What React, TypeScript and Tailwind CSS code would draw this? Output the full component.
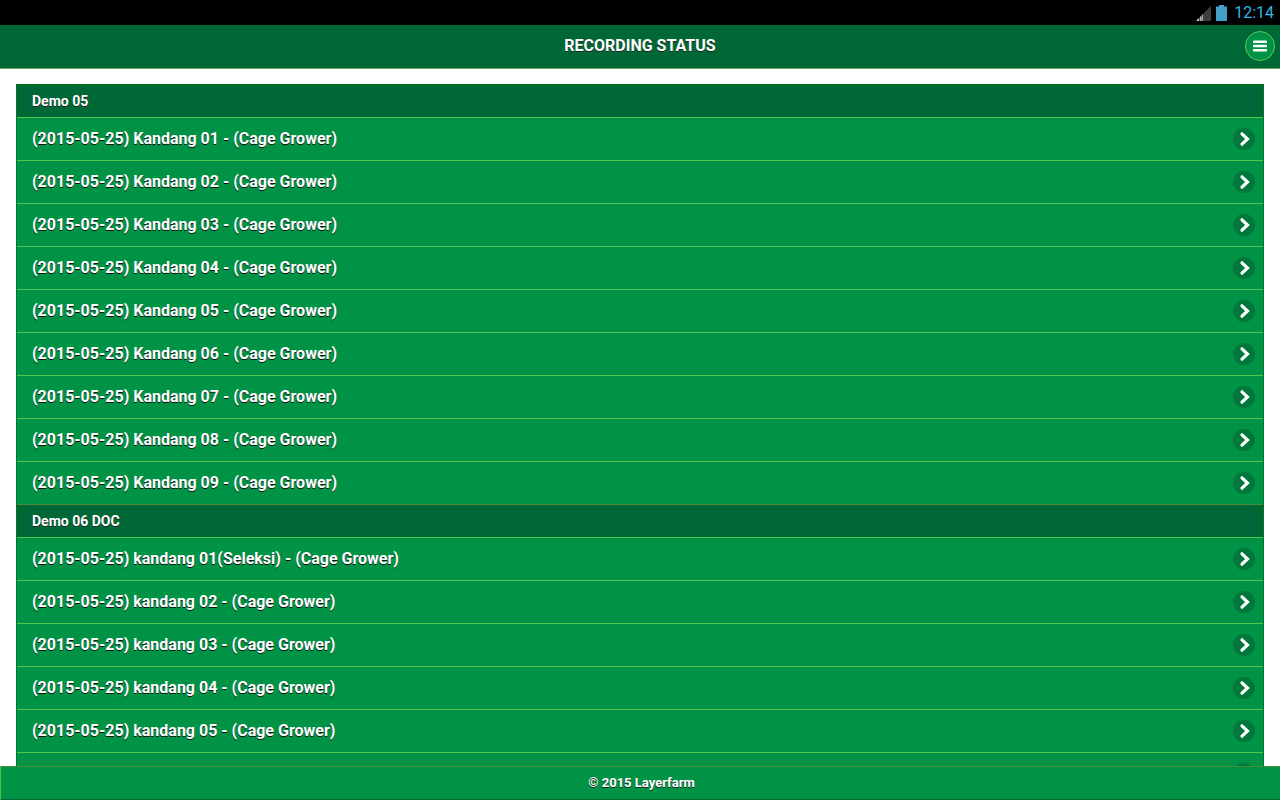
import React from 'react';

interface Section {
  title: string;
  cages: string[];
}

const sections: Section[] = [
  {
    title: 'Demo 05',
    cages: [
      'Kandang 01',
      'Kandang 02',
      'Kandang 03',
      'Kandang 04',
      'Kandang 05',
      'Kandang 06',
      'Kandang 07',
      'Kandang 08',
      'Kandang 09',
    ],
  },
  {
    title: 'Demo 06 DOC',
    cages: [
      'kandang 01(Seleksi)',
      'kandang 02',
      'kandang 03',
      'kandang 04',
      'kandang 05',
      'kandang 06',
    ],
  },
];

const StatusBar: React.FC = () => (
  <div className="flex h-[25px] shrink-0 items-center justify-end bg-black pr-[6px] text-[#33b5e5]">
    <svg className="mr-[5px] h-4 w-[15px]" viewBox="0 0 15 16">
      <path d="M15 1v15H0z" fill="#3f3f3f" />
      <path d="M3 13V16H0z" fill="#c8c8c8" />
      <path d="M4 12l1.500-1.500V16H4z" fill="#b8b8b8" />
      <path d="M6 10l1-1v7H6z" fill="#a8a8a8" />
    </svg>
    <svg className="mr-[7px] h-4 w-[11px]" viewBox="0 0 11 16">
      <path d="M3 0h5v1.500h3V16H0V1.500h3z" fill="#45a0c9" />
    </svg>
    <span className="text-base">12:14</span>
  </div>
);

const Header: React.FC = () => (
  <header className="grid h-11 shrink-0 grid-cols-[1fr_auto_1fr] items-center border-b border-[#6fa862] bg-[#006837] px-[5px] pb-px">
    <h1 className="col-start-2 text-base font-bold text-white [text-shadow:0_1px_0_#222]">RECORDING STATUS</h1>
    <button
      type="button"
      aria-label="Menu"
      className="flex h-[30px] w-[30px] items-center justify-center justify-self-end rounded-full border border-[#5cc85a] bg-[#009245]"
    >
      <svg className="h-[12px] w-[14px]" viewBox="0 0 14 12" fill="#fff">
        <rect y="0.500" width="14" height="2.600" rx="0.500" />
        <rect y="4.700" width="14" height="2.600" rx="0.500" />
        <rect y="8.900" width="14" height="2.600" rx="0.500" />
      </svg>
    </button>
  </header>
);

const CageRow: React.FC<{ name: string }> = ({ name }) => (
  <li>
    <a
      href="#"
      className="flex h-[43px] items-center justify-between border-t border-[#55c552] bg-[#009245] pr-2 pl-[15px] text-base font-bold text-white [text-shadow:0_1px_0_#111]"
    >
      <span>(2015-05-25) {name} - (Cage Grower)</span>
      <svg className="h-[22px] w-[22px]" viewBox="0 0 22 22">
        <circle cx="11" cy="11" r="11" fill="#00783b" />
        <path
          d="M9 5.800L14.500 11 9 16.200"
          fill="none"
          stroke="#fff"
          strokeWidth="3.200"
          strokeLinecap="round"
          strokeLinejoin="miter"
        />
      </svg>
    </a>
  </li>
);

const App: React.FC = () => {
  return (
    <div className="flex h-screen flex-col bg-white font-[Roboto,sans-serif]">
      <StatusBar />
      <Header />
      <main className="min-h-0 flex-1 overflow-y-auto px-4 pt-[15px] [scrollbar-width:none]">
        <div className="border-x border-[#007a1c]">
          {sections.map((section, index) => (
            <section key={section.title}>
              <h2
                className={`flex h-[33px] items-center border-t bg-[#006837] pl-[15px] text-sm font-bold text-white [text-shadow:0_1px_0_#222] ${
                  index === 0 ? 'border-[#007000]' : 'border-[#4c8a3c]'
                }`}
              >
                {section.title}
              </h2>
              <ul>
                {section.cages.map((cage) => (
                  <CageRow key={cage} name={cage} />
                ))}
              </ul>
            </section>
          ))}
        </div>
      </main>
      <footer className="flex h-[34px] shrink-0 items-center justify-center border-t border-b border-l border-t-[#4c8a3c] border-b-[#006837] border-l-[#50c04d] bg-[#009245] pl-[2px] text-[13px] font-bold text-white [text-shadow:0_1px_0_#222]">
        © 2015 Layerfarm
      </footer>
    </div>
  );
};

export default App;
